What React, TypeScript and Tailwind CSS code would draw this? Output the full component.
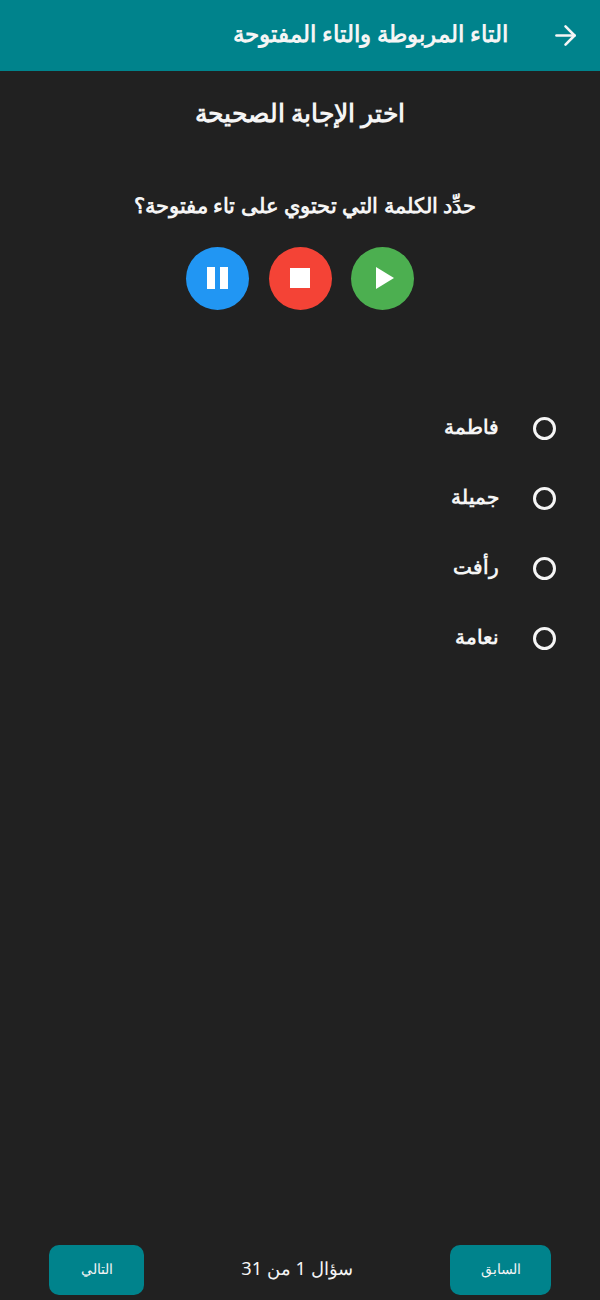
import { ArrowRight } from 'lucide-react';

const options = ['فاطمة', 'جميلة', 'رأفت', 'نعامة'];

export default function App() {
  return (
    <div dir="rtl" className="w-[600px] h-[1300px] flex flex-col bg-[#212121] text-[#f5f5f5] font-['Noto_Sans','Noto_Sans_CJK_SC',sans-serif]">
      {/* Header */}
      <div className="h-[71px] shrink-0 bg-[#00838c] flex items-center pr-[19px] gap-[42px]">
        <ArrowRight size={31} strokeWidth={2} />
        <div className="text-[22.5px] font-semibold pb-[4px]">التاء المربوطة والتاء المفتوحة</div>
      </div>

      <div className="mt-[24px] text-center text-[24.5px] font-semibold">اختر الإجابة الصحيحة</div>
      <div className="mt-[58px] pl-[10px] text-center text-[20.5px] font-semibold">حدِّد الكلمة التي تحتوي على تاء مفتوحة؟</div>

      {/* Audio controls */}
      <div className="mt-[26px] flex justify-center gap-[19.5px]">
        <div className="w-[63px] h-[63px] rounded-full bg-[#4caf50] flex items-center justify-center">
          <svg width="18" height="22" viewBox="0 0 18 22" className="ml-[4px]"><path d="M18 11 0 0v22z" fill="white" /></svg>
        </div>
        <div className="w-[63px] h-[63px] rounded-full bg-[#f44336] flex items-center justify-center">
          <div className="w-[20px] h-[20px] bg-white" />
        </div>
        <div className="w-[63px] h-[63px] rounded-full bg-[#2196f3] flex items-center justify-center">
          <svg width="21" height="22" viewBox="0 0 21 22"><path d="M0 0h8v22H0zM13 0h8v22h-8z" fill="white" /></svg>
        </div>
      </div>

      {/* Options */}
      <div className="mt-[84px] flex flex-col pr-[44px]">
        {options.map((option) => (
          <div key={option} className="h-[70px] flex items-center gap-[34px]">
            <div className="w-[23px] h-[23px] rounded-full border-[3px] border-[#f5f5f5]" />
            <div className="text-[19.7px] font-semibold pb-[4px]">{option}</div>
          </div>
        ))}
      </div>

      {/* Footer */}
      <div className="mt-auto mb-[5px] flex items-center justify-between px-[49px]">
        <button className="w-[101px] h-[50px] rounded-[10px] bg-[#00838c] text-[14px] pb-[3px]">السابق</button>
        <div className="text-[18.2px] pb-[2px]">سؤال 1 من 31</div>
        <button className="w-[95px] h-[50px] rounded-[10px] bg-[#00838c] text-[14px] pb-[3px]">التالي</button>
      </div>
    </div>
  );
}
